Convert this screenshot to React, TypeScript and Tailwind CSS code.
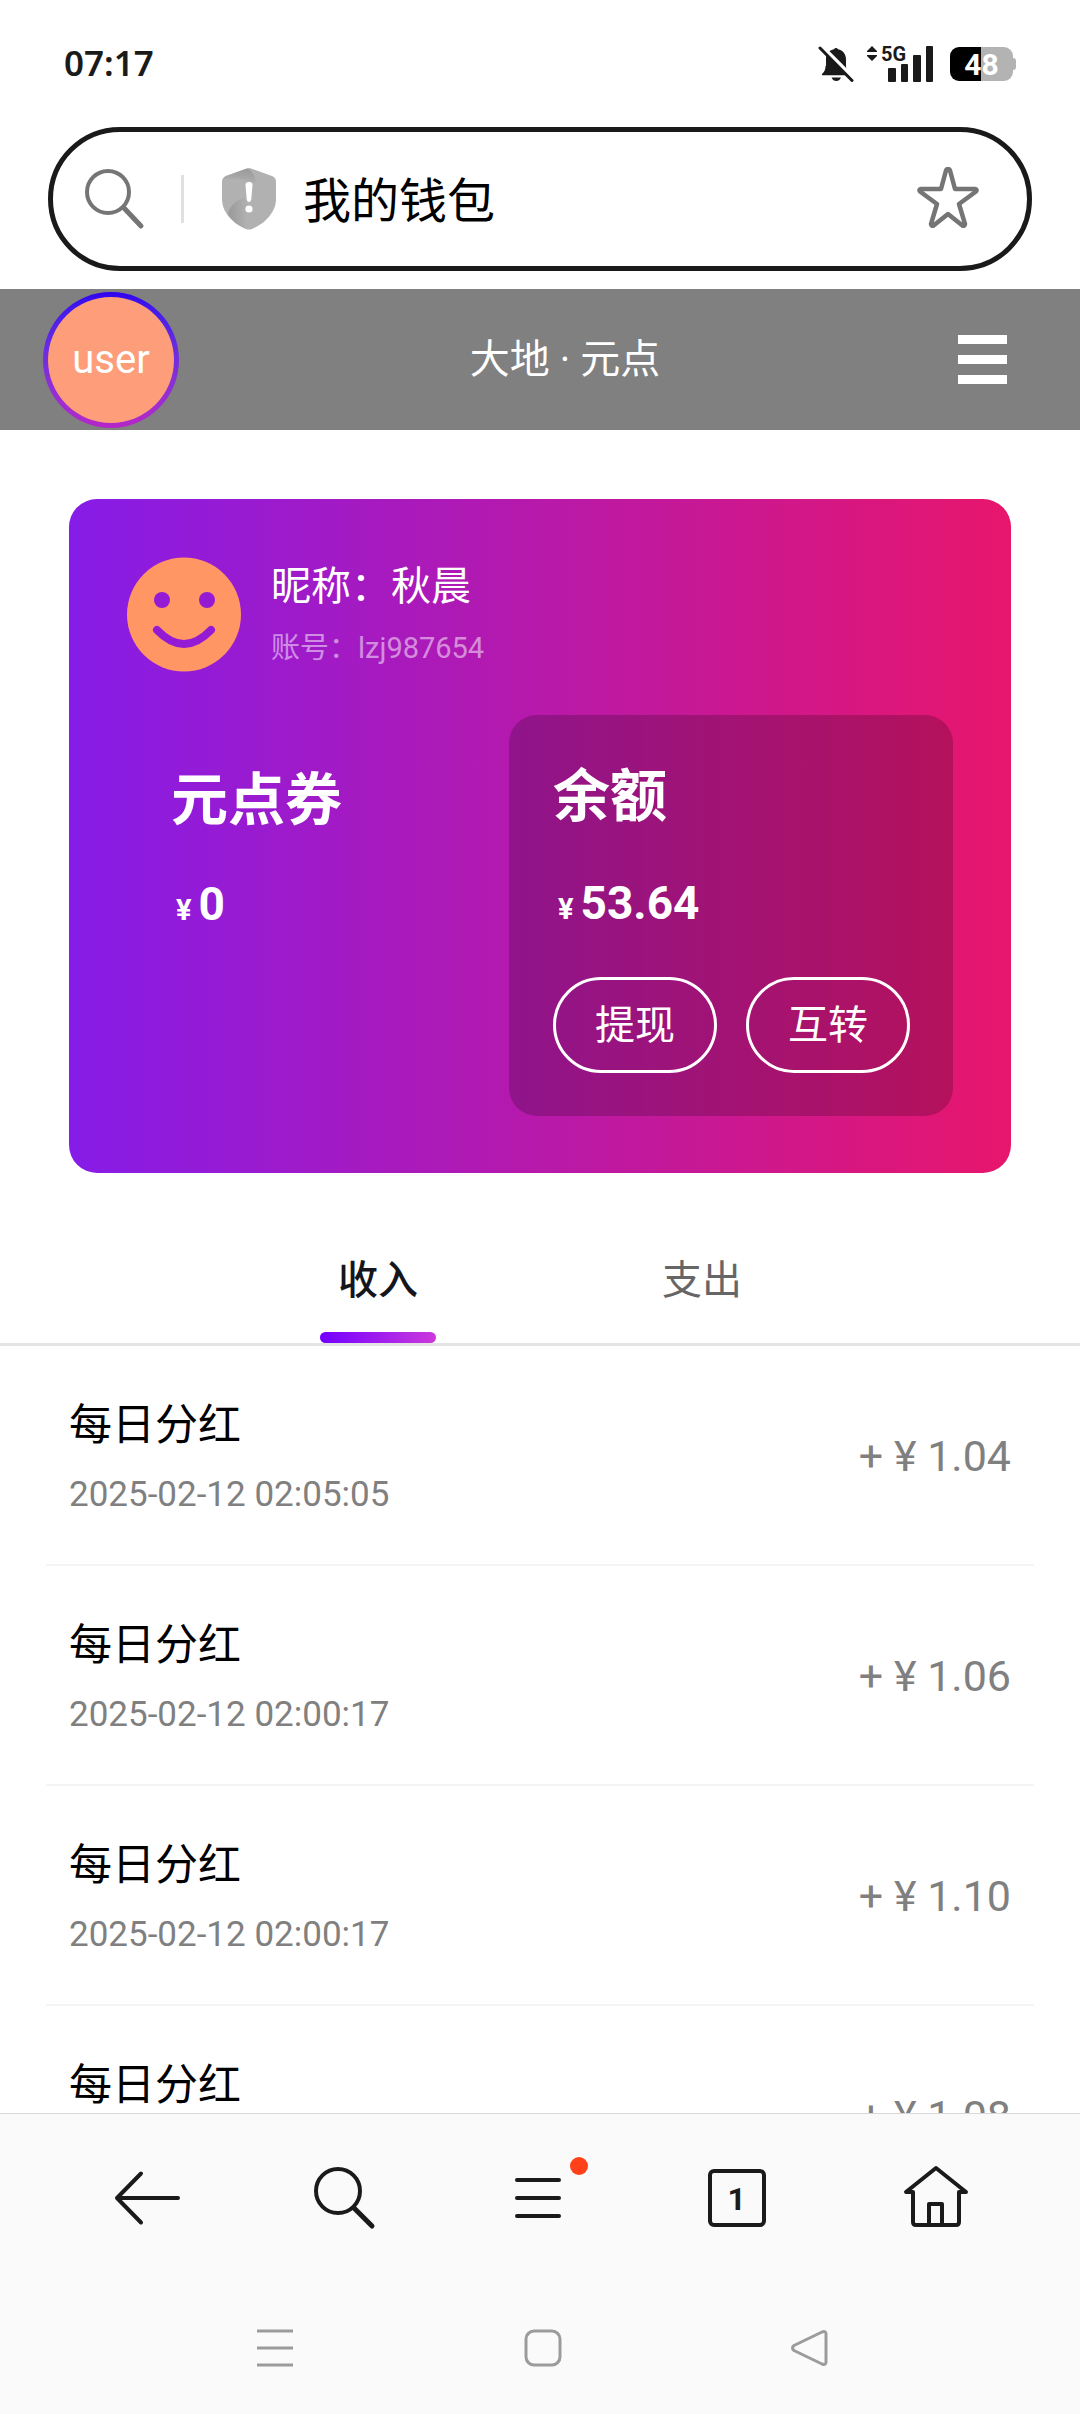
import { useState } from 'react';

const records = [
  { id: 1, title: '每日分红', time: '2025-02-12 02:05:05', amount: '1.04' },
  { id: 2, title: '每日分红', time: '2025-02-12 02:00:17', amount: '1.06' },
  { id: 3, title: '每日分红', time: '2025-02-12 02:00:17', amount: '1.10' },
  { id: 4, title: '每日分红', time: '2025-02-12 02:00:17', amount: '1.08' },
];

const tabs = ['收入', '支出'];

function StatusBar() {
  return (
    <div className="flex h-[127px] shrink-0 items-center justify-between px-16 text-[#1a1a1a]">
      <span className="font-['Noto_Sans'] text-[35px] font-semibold">07:17</span>
      <div className="flex items-center">
        <svg width="36" height="36" viewBox="0 0 36 36" fill="currentColor">
          <path d="M16 3.2a2.2 2.2 0 0 1 4 0c5 1 8 5 8 10v7c0 3 1.500 5 4 7.500v1.500H4V28c3-3 3.500-5 3.500-8v-7c0-5 3.500-8.800 8.500-9.800Z" />
          <path d="M13.500 31.500h9.500c-1 2.400-2.600 3.500-4.700 3.500s-3.800-1.100-4.800-3.500Z" />
          <path d="M2.500-1 37.500 34" stroke="#fff" strokeWidth="4" />
          <path d="M0 0h4L8 8v12H0Z" fill="#fff" />
          <path d="M2 2 34 34.500" stroke="currentColor" strokeWidth="3" strokeLinecap="round" />
        </svg>
        <svg className="ml-3 overflow-visible" width="68" height="38" viewBox="0 0 68 38" fill="currentColor">
          <path d="M6 1 11 6v1H1V6ZM1 10h10v1l-5 5-5-5Z" />
          <text x="15" y="16" fontFamily="Roboto" fontSize="20" fontWeight="700">5G</text>
          <rect x="22" y="23" width="8" height="14" rx="1" />
          <rect x="35" y="19" width="7" height="18" rx="1" />
          <rect x="47" y="10" width="8" height="27" rx="1" />
          <rect x="60" y="1" width="7" height="36" rx="1" />
        </svg>
        <div className="ml-4 flex items-center">
          <span className="flex h-[34px] w-[63px] items-center justify-center rounded-[9px] bg-linear-to-r from-black from-50% to-[#b3b3b3] to-50% pt-0.5 text-[30px] font-bold leading-[34px] text-white">
            48
          </span>
          <span className="h-3 w-[3px] rounded-r-sm bg-[#b3b3b3]"></span>
        </div>
      </div>
    </div>
  );
}

function AddressBar() {
  return (
    <div className="mx-12 flex h-36 shrink-0 items-center rounded-full border-5 border-[#1a1a1a] pl-8 pr-[47px]">
      <svg width="60" height="62" viewBox="0 0 60 62" fill="none" stroke="#757575">
        <circle cx="23" cy="24" r="21" strokeWidth="4" />
        <path d="M39 40 56 58" strokeWidth="5" strokeLinecap="round" />
      </svg>
      <span className="ml-9 h-12 w-[3px] bg-[#e0e0e0]"></span>
      <svg className="ml-[37px]" width="56" height="64" viewBox="0 0 56 64">
        <defs>
          <linearGradient id="shieldTop" x1="0.4" y1="1" x2="0.7" y2="0">
            <stop offset="0" stopColor="#b1b1b1" />
            <stop offset="1" stopColor="#999" />
          </linearGradient>
          <linearGradient id="shieldLeft" x1="0" y1="0" x2="1" y2="0">
            <stop offset="0" stopColor="#999" />
            <stop offset="1" stopColor="#b1b1b1" />
          </linearGradient>
        </defs>
        <path d="M26 1.500q2-1 4 0L51 9q4 1.500 4 6v17c0 14-12 25-24 30q-3 1.200-6 0C13 57 1 46 1 32V15q0-4.500 4-6Z" fill="#b1b1b1" />
        <path d="M2 12q1-2.200 3-3L26 1.500c5 1.500 8.500 8 9 15Q22 10 2 12Z" fill="url(#shieldTop)" />
        <path d="M7 47C9 38 16 32 26 30v32C18 59.500 11 54 7 47Z" fill="url(#shieldLeft)" />
        <path d="M24.500 18q0-3 3.500-3t3.500 3l-1.200 14q-.3 3-2.300 3t-2.300-3Z" fill="#fff" />
        <circle cx="28" cy="42" r="3.600" fill="#fff" />
      </svg>
      <input
        type="text"
        aria-label="网址"
        defaultValue="我的钱包"
        className="ml-[26px] h-20 min-w-0 flex-1 bg-transparent pb-1 text-[48px] text-black outline-none"
      />
      <button aria-label="收藏">
        <svg width="64" height="64" viewBox="0 3 64 64" fill="none" stroke="#757575" strokeWidth="4.500" strokeLinejoin="round">
          <path d="M32 5q-1.500 0-2 1.500L25 25H5q-2.500.500-1 2.500L21 40l-6 20q.2 2.500 2.600 1.600L32 50l14.400 11.600q2.400.900 2.600-1.600l-6-20 17-12.500q1.500-2-1-2.500H39L34 6.500Q33.500 5 32 5Z" />
        </svg>
      </button>
    </div>
  );
}

function SiteHeader() {
  return (
    <header className="mt-[18px] flex h-[141px] shrink-0 items-center justify-between bg-[#808080] pl-[43px] pr-[73px] text-[40px] text-white">
      <a href="#user" className="size-[136px] rounded-full bg-linear-to-b from-[#3000f0] to-[#b525c8] p-[5px]">
        <span className="flex size-full items-center justify-center rounded-full bg-[#fd9d79]">user</span>
      </a>
      <h1>大地 · 元点</h1>
      <button aria-label="菜单" className="flex w-14 flex-col items-end gap-[11px]">
        <span className="h-[9px] w-[49px] bg-white"></span>
        <span className="h-[9px] w-[49px] bg-white"></span>
        <span className="h-[9px] w-[49px] bg-white"></span>
      </button>
    </header>
  );
}

function Money({ value }: { value: string }) {
  return (
    <p className="flex h-[60px] items-baseline pl-[5px] text-[46px] font-bold leading-[60px]">
      <span className="mr-[7px] text-[29px]">¥</span>
      {value}
    </p>
  );
}

function WalletCard() {
  return (
    <section className="mx-[69px] rounded-[28px] bg-linear-to-r/srgb from-[#861ce8] to-[#e8166c] px-[58px] pt-[58px] pb-[57px] text-white">
      <div className="flex items-start gap-[30px]">
        <svg width="114" height="115" viewBox="0 0 114 115">
          <circle cx="57" cy="57.500" r="57" fill="#ff9664" />
          <g fill="#941bd3">
            <circle cx="35" cy="43" r="8" />
            <circle cx="80" cy="43" r="8" />
          </g>
          <path d="M30 73q27 28 54 0" fill="none" stroke="#941bd3" strokeWidth="8" strokeLinecap="round" />
        </svg>
        <div>
          <p className="text-[40px] leading-[60px]">昵称：秋晨</p>
          <p className="mt-[11px] text-[29px] leading-10 text-white/50">账号：lzj987654</p>
        </div>
      </div>
      <div className="mt-[43px] flex">
        <div className="flex-1 pt-[46px] pl-11">
          <h2 className="text-[57px] font-bold leading-[80px]">元点券</h2>
          <div className="mt-[33px]">
            <Money value="0" />
          </div>
        </div>
        <div className="rounded-[28px] bg-black/20 pt-[42px] pr-[43px] pb-[43px] pl-11">
          <h2 className="text-[57px] font-bold leading-[80px]">余额</h2>
          <div className="mt-9">
            <Money value="53.64" />
          </div>
          <div className="mt-11 flex gap-[29px]">
            <button className="h-24 w-[164px] rounded-full border-3 border-white pt-0.5 text-[40px]">提现</button>
            <button className="h-24 w-[164px] rounded-full border-3 border-white pt-0.5 text-[40px]">互转</button>
          </div>
        </div>
      </div>
    </section>
  );
}

function RecordTabs() {
  const [active, setActive] = useState('收入');

  return (
    <div className="mt-[41px] border-b-3 border-[#e4e4e4]">
      <div className="mx-auto grid w-3/5 grid-cols-2">
        {tabs.map((tab) => (
          <button
            key={tab}
            onClick={() => setActive(tab)}
            className={
              active === tab
                ? 'relative h-[129px] pt-1 text-[40px] font-medium text-[#15151c]'
                : 'relative h-[129px] pt-1 text-[40px] text-[#666]'
            }
          >
            {tab}
            {active === tab && (
              <span className="absolute bottom-0 left-1/2 h-[11px] w-[116px] -translate-x-1/2 rounded-full bg-linear-to-r/srgb from-[#7300ff] to-[#cc39dc]"></span>
            )}
          </button>
        ))}
      </div>
    </div>
  );
}

function RecordList() {
  return (
    <ul className="mx-[46px]">
      {records.map((record) => (
        <li key={record.id} className="flex h-[220px] items-center justify-between border-b-2 border-[#f4f4f4] px-[23px] pt-0.5">
          <div>
            <p className="text-[43px] leading-[60px] text-black">{record.title}</p>
            <p className="mt-[18px] text-[35px] leading-11 text-[#808080]">{record.time}</p>
          </div>
          <span className="text-[43px] text-[#808080]">+ ¥ {record.amount}</span>
        </li>
      ))}
    </ul>
  );
}

function BottomBar() {
  return (
    <footer className="shrink-0 border-t border-[#d9d9d9] bg-[#fafafa]">
      {/* Browser toolbar */}
      <nav className="grid h-[168px] grid-cols-5 items-center justify-items-center px-12 text-[#1a1a1a]">
        <button aria-label="后退">
          <svg width="80" height="80" viewBox="0 0 80 80" fill="none" stroke="currentColor" strokeWidth="4" strokeLinecap="round" strokeLinejoin="round">
            <path d="M72 40H12M35 15.500 11 40l24 24.500" />
          </svg>
        </button>
        <button aria-label="搜索">
          <svg width="80" height="80" viewBox="0 0 80 80" fill="none" stroke="currentColor" strokeLinecap="round">
            <circle cx="35" cy="33" r="22" strokeWidth="4" />
            <path d="M51 50 69 68" strokeWidth="5" />
          </svg>
        </button>
        <button aria-label="更多" className="relative">
          <svg width="80" height="80" viewBox="0 0 80 80" fill="none" stroke="currentColor" strokeWidth="4" strokeLinecap="round">
            <path d="M17 22h42M17 40h42M17 58h42" />
          </svg>
          <span className="absolute top-[-1px] right-[-8px] size-[18px] rounded-full bg-[#ff4019]"></span>
        </button>
        <button aria-label="标签页" className="flex h-[58px] w-[58px] items-center justify-center rounded-md border-4 border-[#1a1a1a] pt-0.5 text-[32px] font-bold leading-10">
          1
        </button>
        <button aria-label="主页">
          <svg width="80" height="80" viewBox="0 0 80 80" fill="none" stroke="currentColor" strokeWidth="4" strokeLinecap="round" strokeLinejoin="round">
            <path d="M42 10 12 34h7v30q0 3 3 3h40q3 0 3-3V34h7Z" />
            <path d="M35 66V46h13v20" />
          </svg>
        </button>
      </nav>
      {/* System navigation */}
      <nav className="grid h-[132px] grid-cols-3 items-center justify-items-center pr-[138px] pl-[142px]">
        <button aria-label="最近任务">
          <svg width="40" height="40" viewBox="0 0 40 40" stroke="#9b9b9b" strokeWidth="3">
            <path d="M2 3h36M2 20h36M2 37h36" />
          </svg>
        </button>
        <button aria-label="桌面">
          <svg width="40" height="40" viewBox="0 0 40 40" fill="none" stroke="#9b9b9b" strokeWidth="3">
            <rect x="4" y="3" width="34" height="34" rx="8" />
          </svg>
        </button>
        <button aria-label="返回">
          <svg width="40" height="40" viewBox="0 0 40 40" fill="none" stroke="#9b9b9b" strokeWidth="3" strokeLinejoin="round">
            <path d="M5 17.500 33 4q4-1.500 4 2v28q0 3.500-4 2L5 22.500q-3-2.500 0-5Z" />
          </svg>
        </button>
      </nav>
    </footer>
  );
}

export default function App() {
  return (
    <div className="flex h-screen flex-col bg-white font-[Roboto,'Noto_Sans_CJK_SC',sans-serif]">
      <StatusBar />
      <AddressBar />
      <SiteHeader />
      <main className="min-h-0 flex-1 overflow-hidden pt-[69px]">
        <WalletCard />
        <RecordTabs />
        <RecordList />
      </main>
      <BottomBar />
    </div>
  );
}
